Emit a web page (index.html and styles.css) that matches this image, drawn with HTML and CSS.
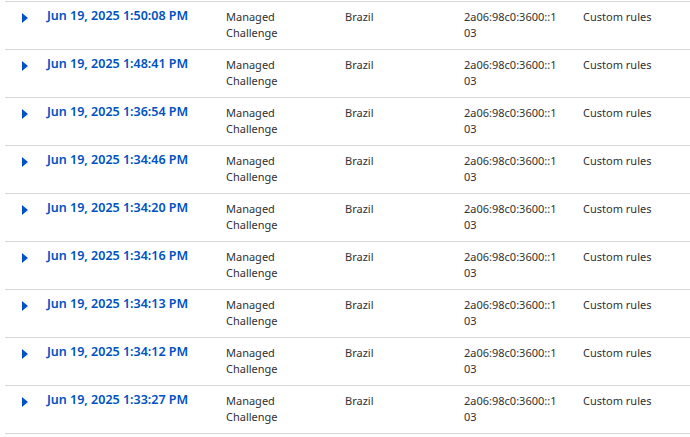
FILE: index.html
```html
<!DOCTYPE html>
<html>
<head>
<meta charset="utf-8">
<link rel="stylesheet" href="styles.css">
</head>
<body>
<div class="table">
  <div class="row"><div class="cell toggle"><span class="tri"></span></div><div class="cell date">Jun 19, 2025 1:50:08 PM</div><div class="cell">Managed Challenge</div><div class="cell">Brazil</div><div class="cell ip">2a06:98c0:3600::103</div><div class="cell">Custom rules</div></div>
  <div class="row"><div class="cell toggle"><span class="tri"></span></div><div class="cell date">Jun 19, 2025 1:48:41 PM</div><div class="cell">Managed Challenge</div><div class="cell">Brazil</div><div class="cell ip">2a06:98c0:3600::103</div><div class="cell">Custom rules</div></div>
  <div class="row"><div class="cell toggle"><span class="tri"></span></div><div class="cell date">Jun 19, 2025 1:36:54 PM</div><div class="cell">Managed Challenge</div><div class="cell">Brazil</div><div class="cell ip">2a06:98c0:3600::103</div><div class="cell">Custom rules</div></div>
  <div class="row"><div class="cell toggle"><span class="tri"></span></div><div class="cell date">Jun 19, 2025 1:34:46 PM</div><div class="cell">Managed Challenge</div><div class="cell">Brazil</div><div class="cell ip">2a06:98c0:3600::103</div><div class="cell">Custom rules</div></div>
  <div class="row"><div class="cell toggle"><span class="tri"></span></div><div class="cell date">Jun 19, 2025 1:34:20 PM</div><div class="cell">Managed Challenge</div><div class="cell">Brazil</div><div class="cell ip">2a06:98c0:3600::103</div><div class="cell">Custom rules</div></div>
  <div class="row"><div class="cell toggle"><span class="tri"></span></div><div class="cell date">Jun 19, 2025 1:34:16 PM</div><div class="cell">Managed Challenge</div><div class="cell">Brazil</div><div class="cell ip">2a06:98c0:3600::103</div><div class="cell">Custom rules</div></div>
  <div class="row"><div class="cell toggle"><span class="tri"></span></div><div class="cell date">Jun 19, 2025 1:34:13 PM</div><div class="cell">Managed Challenge</div><div class="cell">Brazil</div><div class="cell ip">2a06:98c0:3600::103</div><div class="cell">Custom rules</div></div>
  <div class="row"><div class="cell toggle"><span class="tri"></span></div><div class="cell date">Jun 19, 2025 1:34:12 PM</div><div class="cell">Managed Challenge</div><div class="cell">Brazil</div><div class="cell ip">2a06:98c0:3600::103</div><div class="cell">Custom rules</div></div>
  <div class="row"><div class="cell toggle"><span class="tri"></span></div><div class="cell date">Jun 19, 2025 1:33:27 PM</div><div class="cell">Managed Challenge</div><div class="cell">Brazil</div><div class="cell ip">2a06:98c0:3600::103</div><div class="cell">Custom rules</div></div>
</div>
</body>
</html>
```
FILE: styles.css
```css
html, body {
  margin: 0;
  padding: 0;
  background: #ffffff;
}
body {
  font-family: "Noto Sans", "Open Sans", sans-serif;
  color: #313131;
  overflow: hidden;
}
.table {
  margin: 1px 0 0 5px;
  border-bottom: 1px solid #d6d6d6;
}
.row {
  display: grid;
  grid-template-columns: 42px 179px 119px 119px 119px 1fr;
  height: 47px;
  border-top: 1px solid #d6d6d6;
  box-sizing: content-box;
}
.cell {
  padding-top: 7px;
  font-size: 11px;
  line-height: 16px;
  padding-right: 22px;
}
.ip {
  word-break: break-all;
}
.toggle {
  padding: 11px 0 0 17px;
}
.tri {
  display: block;
  width: 0;
  height: 0;
  border-top: 5px solid transparent;
  border-bottom: 5px solid transparent;
  border-left: 6px solid #0051c3;
}
.date {
  color: #0051c3;
  font-weight: 600;
  font-size: 12.5px;
  padding-top: 6px;
  padding-right: 0;
}
```
